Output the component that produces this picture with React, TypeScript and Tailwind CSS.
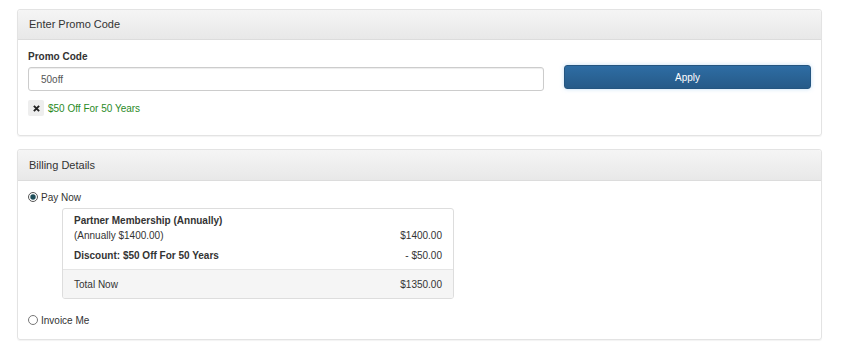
export default function App() {
  return (
    <div className="w-[846px] h-[347px] bg-white text-[10px] text-[#333] pt-[9px] pl-[17px] pr-[24px]" style={{ fontFamily: '"Liberation Sans", Arial, sans-serif' }}>
      <div className="border border-[#e3e3e3] rounded-[3px] shadow-[0_1px_1px_rgba(0,0,0,0.05)] h-[127px]">
        <div className="h-[30px] bg-gradient-to-b from-[#f5f5f5] to-[#e8e8e8] border-b border-[#dcdcdc] flex items-center pl-[11px] text-[11px] text-[#333] rounded-t-[3px]">
          Enter Promo Code
        </div>
        <div className="flex pl-[10px] pr-[10px] pt-[10px] gap-[20px]">
          <div className="flex-1 flex flex-col">
            <div className="font-bold text-[10px] leading-[14px] mb-[3px]">Promo Code</div>
            <div className="h-[24px] border border-[#ccc] rounded-[3px] flex items-center pl-[12px] text-[10px] text-[#555] shadow-[inset_0_1px_1px_rgba(0,0,0,0.075)]">50off</div>
            <div className="flex items-center mt-[9px] gap-[4px]">
              <div className="w-[16px] h-[16px] bg-[#eee] rounded-[2px] flex items-center justify-center">
                <svg width="7" height="7" viewBox="0 0 8 8"><path d="M1 1L7 7M7 1L1 7" stroke="#222" strokeWidth="2.2" /></svg>
              </div>
              <span className="text-[#2a8a1f] text-[10px]">$50 Off For 50 Years</span>
            </div>
          </div>
          <div className="w-[247px] pt-[15px]">
            <div className="h-[24px] rounded-[3px] bg-gradient-to-b from-[#2e6da4] to-[#265a88] border border-[#245580] text-white flex items-center justify-center text-[10px] shadow-[0_0_4px_rgba(102,175,233,0.4)]">Apply</div>
          </div>
        </div>
      </div>
      <div className="mt-[13px] border border-[#e3e3e3] rounded-[3px] shadow-[0_1px_1px_rgba(0,0,0,0.05)] h-[191px]">
        <div className="h-[31px] bg-gradient-to-b from-[#f5f5f5] to-[#e8e8e8] border-b border-[#dcdcdc] flex items-center pl-[11px] text-[11px] text-[#333] rounded-t-[3px]">
          Billing Details
        </div>
        <div className="pl-[10px] pt-[9px]">
          <div className="flex items-center gap-[3px] h-[14px]">
            <svg width="10" height="10" viewBox="0 0 10 10"><circle cx="5" cy="5" r="4.5" fill="white" stroke="#555" /><circle cx="5" cy="5" r="2.7" fill="#1f4e5a" /></svg>
            <span>Pay Now</span>
          </div>
          <div className="ml-[34px] mt-[4px] w-[392px] border border-[#ddd] rounded-[3px] overflow-hidden">
            <div className="px-[11px] pt-[4px] h-[60px]">
              <div className="font-bold leading-[15px]">Partner Membership (Annually)</div>
              <div className="flex justify-between leading-[15px]"><span>(Annually $1400.00)</span><span>$1400.00</span></div>
              <div className="flex justify-between leading-[15px] mt-[5px]"><span className="font-bold">Discount: $50 Off For 50 Years</span><span>- $50.00</span></div>
            </div>
            <div className="bg-[#f5f5f5] border-t border-[#e5e5e5] h-[29px] flex items-center justify-between px-[11px]">
              <span>Total Now</span><span>$1350.00</span>
            </div>
          </div>
          <div className="flex items-center gap-[3px] h-[14px] mt-[14px]">
            <svg width="10" height="10" viewBox="0 0 10 10"><circle cx="5" cy="5" r="4.5" fill="white" stroke="#777" /></svg>
            <span>Invoice Me</span>
          </div>
        </div>
      </div>
    </div>
  );
}
